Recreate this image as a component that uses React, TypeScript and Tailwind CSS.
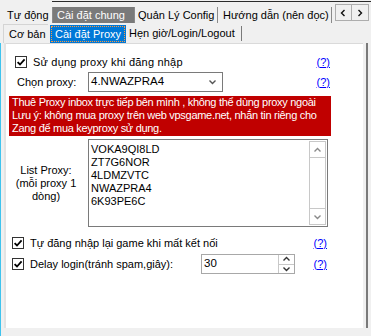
import React from "react";

function Check() {
  return (
    <span className="w-[12px] h-[12px] border border-[#333333] bg-white flex items-center justify-center shrink-0">
      <svg width="10" height="10" viewBox="0 0 10 10">
        <path d="M1.6 5.1 L4 7.5 L8.6 2.4" fill="none" stroke="#000" strokeWidth="1.8" />
      </svg>
    </span>
  );
}

function Help({ mr }: { mr: string }) {
  return <span className={`ml-auto text-[#0000ff] underline ${mr}`}>(?)</span>;
}

function Chevron({ dir, color = "#404040" }: { dir: "up" | "down" | "left" | "right"; color?: string }) {
  const d = {
    up: "M1.5 5.5 L4.5 2.5 L7.5 5.5",
    down: "M1.5 2.5 L4.5 5.5 L7.5 2.5",
    left: "M5.5 1 L2.5 4 L5.5 7",
    right: "M2.5 1 L5.5 4 L2.5 7",
  }[dir];
  return (
    <svg width="9" height="8" viewBox="0 0 9 8">
      <path d={d} fill="none" stroke={color} strokeWidth="1.4" />
    </svg>
  );
}

export default function App() {
  return (
    <div className="w-[371px] h-[336px] bg-[#f0f0f0] overflow-hidden font-['Liberation_Sans',Arial,sans-serif] text-[11px] text-black leading-none">
      {/* Top tabs */}
      <div className="flex h-[24px]">
        <div className="w-[52px] pt-[10px] pl-[7px]">Tự động</div>
        <div className="flex-1 flex flex-col">
          <div className="mt-px h-px bg-[#2a2a2a]" />
          <div className="flex">
            <div className="mt-[5px] flex h-[16px]">
              <div className="border-l border-[#8a8a8a] w-[82px] bg-[#7a7a7a] text-white pl-[4px] flex items-center">Cài đặt chung</div>
              <div className="border-l border-[#8a8a8a] w-[83px] pl-[3px] flex items-center">Quản Lý Config</div>
              <div className="border-l border-r border-[#8a8a8a] w-[115px] pl-[5px] flex items-center">Hướng dẫn (nên đọc)</div>
            </div>
            <div className="ml-[3px] mt-[2px] flex h-[17px] border border-[#adadad]">
              <div className="w-[16px] flex items-center justify-center border-r border-[#adadad]">
                <Chevron dir="left" color="#111" />
              </div>
              <div className="w-[16px] flex items-center justify-center">
                <Chevron dir="right" color="#111" />
              </div>
            </div>
          </div>
        </div>
      </div>

      {/* Sub tabs */}
      <div className="flex h-[19px]">
        <div className="ml-[3px] w-[45px] border-l border-t border-[#d4d4d4] pl-[5px] flex items-center">Cơ bản</div>
        <div className="ml-[2px] mt-px w-[76px] bg-[#0078d7] p-px">
          <div className="h-full border border-dotted border-[#ff9a3c] text-white pl-[3px] flex items-center">Cài đặt Proxy</div>
        </div>
        <div className="w-[116px] border-r border-[#7a7a7a] my-[2px] pl-[3px] flex items-center">Hẹn giờ/Login/Logout</div>
      </div>

      {/* Panel */}
      <div className="flex h-[293px] border-l border-[#3fc3ee]">
        <div className="w-[3px]" />
        <div className="w-[2px] h-[285px] bg-[#e3e3e3]" />
        <div className="flex flex-col flex-1">
          <div className="h-[285px] bg-white border-t border-[#dadada] flex flex-col">
            {/* Row A */}
            <div className="mt-[11px] h-[14px] flex items-center">
              <span className="ml-[9px]"><Check /></span>
              <span className="ml-[6px] tracking-[0.2px]">Sử dụng proxy khi đăng nhập</span>
              <Help mr="mr-[33px]" />
            </div>
            {/* Row B */}
            <div className="mt-[3px] h-[20px] flex items-center">
              <span className="ml-[11px] w-[71px]">Chọn proxy:</span>
              <div className="w-[135px] h-[20px] border border-[#7a7a7a] flex items-center pl-[2px] pr-[5px]">
                <span className="text-[11.5px]">4.NWAZPRA4</span>
                <span className="ml-auto"><Chevron dir="down" color="#555" /></span>
              </div>
              <Help mr="mr-[33px]" />
            </div>
            {/* Notice */}
            <div className="mt-[4px] ml-[3px] w-[322px] h-[40px] bg-[#c00000] text-white pl-[3px] leading-[13px] tracking-[-0.3px] whitespace-nowrap overflow-hidden">
              <div>Thuê Proxy inbox trực tiếp bên mình , không thể dùng proxy ngoài</div>
              <div>Lưu ý: không mua proxy trên web vpsgame.net, nhắn tin riêng cho</div>
              <div>Zang để mua keyproxy sử dụng.</div>
            </div>
            {/* List */}
            <div className="mt-[3px] flex items-center">
              <div className="w-[82px] text-center leading-[13px] pr-[2px]">
                List Proxy:
                <br />
                (mỗi proxy 1
                <br />
                dòng)
              </div>
              <div className="w-[240px] h-[88px] border border-[#7a7a7a] flex">
                <div className="flex-1 pl-[2px] pt-[3px] leading-[13px]">
                  <div>VOKA9QI8LD</div>
                  <div>ZT7G6NOR</div>
                  <div>4LDMZVTC</div>
                  <div>NWAZPRA4</div>
                  <div>6K93PE6C</div>
                </div>
                <div className="w-[17px] my-px mr-px border border-[#c8c8c8] flex flex-col">
                  <div className="h-[16px] border-b border-[#c8c8c8] flex items-center justify-center">
                    <Chevron dir="up" color="#8a8a8a" />
                  </div>
                  <div className="flex-1" />
                  <div className="h-[16px] border-t border-[#c8c8c8] flex items-center justify-center">
                    <Chevron dir="down" color="#8a8a8a" />
                  </div>
                </div>
              </div>
            </div>
            {/* Row C */}
            <div className="mt-[10px] h-[12px] flex items-center">
              <span className="ml-[6px]"><Check /></span>
              <span className="ml-[6px]">Tự đăng nhập lại game khi mất kết nối</span>
              <Help mr="mr-[36px]" />
            </div>
            {/* Row D */}
            <div className="mt-[5px] h-[20px] flex items-center">
              <span className="ml-[6px]"><Check /></span>
              <span className="ml-[6px] w-[171px]">Delay login(tránh spam,giây):</span>
              <div className="w-[94px] h-[20px] border border-[#a8a8a8] flex">
                <span className="flex-1 pl-[2px] flex items-center text-[11.5px]">30</span>
                <div className="w-[16px] flex flex-col border-l border-[#c8c8c8]">
                  <div className="flex-1 border-b border-[#c8c8c8] flex items-center justify-center">
                    <Chevron dir="up" color="#333" />
                  </div>
                  <div className="flex-1 flex items-center justify-center">
                    <Chevron dir="down" color="#333" />
                  </div>
                </div>
              </div>
              <Help mr="mr-[36px]" />
            </div>
          </div>
        </div>
        <div className="w-[3px]" />
        <div className="w-[2px] h-[285px] bg-[#7a7a7a]" />
        <div className="w-[3px]" />
      </div>
    </div>
  );
}
